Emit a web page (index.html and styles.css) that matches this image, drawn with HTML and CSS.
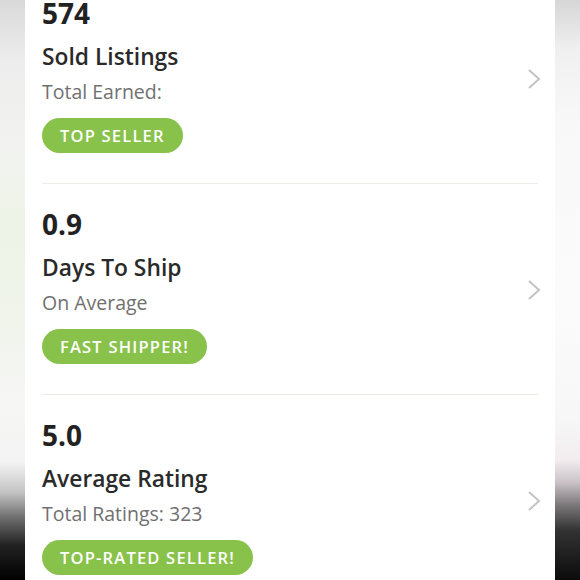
FILE: index.html
```html
<!DOCTYPE html>
<html lang="en">
<head>
    <meta charset="UTF-8">
    <meta name="viewport" content="width=device-width, initial-scale=1.0">
    <title>Seller Stats</title>
    <link rel="stylesheet" href="styles.css">
</head>
<body>

    <div class="screen">
        <div class="edge edge-left"></div>

        <div class="card">
            <div class="stats">
                <div class="stat">
                    <div class="stat-body">
                        <div class="stat-value">574</div>
                        <div class="stat-label">Sold Listings</div>
                        <div class="stat-note">Total Earned:</div>
                        <span class="badge">TOP SELLER</span>
                    </div>
                    <svg class="chevron" width="14" height="22" viewBox="0 0 14 22"><path d="M2 2 L12 11 L2 20" /></svg>
                </div>

                <div class="stat">
                    <div class="stat-body">
                        <div class="stat-value">0.9</div>
                        <div class="stat-label">Days To Ship</div>
                        <div class="stat-note">On Average</div>
                        <span class="badge">FAST SHIPPER!</span>
                    </div>
                    <svg class="chevron" width="14" height="22" viewBox="0 0 14 22"><path d="M2 2 L12 11 L2 20" /></svg>
                </div>

                <div class="stat">
                    <div class="stat-body">
                        <div class="stat-value">5.0</div>
                        <div class="stat-label">Average Rating</div>
                        <div class="stat-note">Total Ratings: 323</div>
                        <span class="badge">TOP-RATED SELLER!</span>
                    </div>
                    <svg class="chevron" width="14" height="22" viewBox="0 0 14 22"><path d="M2 2 L12 11 L2 20" /></svg>
                </div>
            </div>
        </div>

        <div class="edge edge-right"></div>
    </div>

</body>
</html>
```

FILE: styles.css
```css
body {
    margin: 0;
    padding: 0;
    font-family: "Open Sans", "Noto Sans", Arial, sans-serif;
    background-color: #fff;
}
.screen {
    display: grid;
    grid-template-columns: 25px 1fr 25px;
    height: 580px;
    overflow: hidden;
}
.edge-left {
    background: linear-gradient(to bottom, #d9d9d9 0, #ededed 60px, #f2f3f0 150px, #edf3e6 230px, #f0f4eb 320px, #f6f6f5 400px, #f3f3f3 462px, #c4c4c4 492px, #707070 517px, #222 545px, #000 580px);
}
.edge-right {
    background: linear-gradient(to bottom, #d6d6d6 0, #f0f0f0 50px, #f8f8f8 120px, #fbfbfb 300px, #f7f7f7 420px, #f2ecef 460px, #cbc3c8 482px, #7c787a 505px, #333 530px, #0b0b0b 580px);
}
.card {
    background: #fff;
    padding: 0 17px;
    overflow: hidden;
}
.stats {
    margin-top: -27px;
}
.stat {
    display: flex;
    align-items: center;
    justify-content: space-between;
    padding: 24px 0 30px;
    border-bottom: 1px solid #efebe6;
}
.stat-body {
    display: flex;
    flex-direction: column;
    align-items: flex-start;
}
.stat-value {
    font-size: 28px;
    line-height: 32px;
    font-weight: 700;
    color: #222;
}
.stat-label {
    margin-top: 14px;
    font-size: 22.8px;
    line-height: 28px;
    font-weight: 600;
    color: #2a2a2a;
}
.stat-note {
    margin-top: 9px;
    font-size: 19.5px;
    line-height: 24px;
    color: #707070;
}
.badge {
    display: inline-flex;
    align-items: center;
    height: 35px;
    margin-top: 14px;
    padding: 0 18px;
    border-radius: 18px;
    background-color: #88c24b;
    color: #fff;
    font-size: 16.5px;
    font-weight: 600;
    letter-spacing: 1.2px;
}
.chevron {
    margin-top: 7px;
    margin-right: -3px;
    fill: none;
    stroke: #c3c3c3;
    stroke-width: 2;
}
```
